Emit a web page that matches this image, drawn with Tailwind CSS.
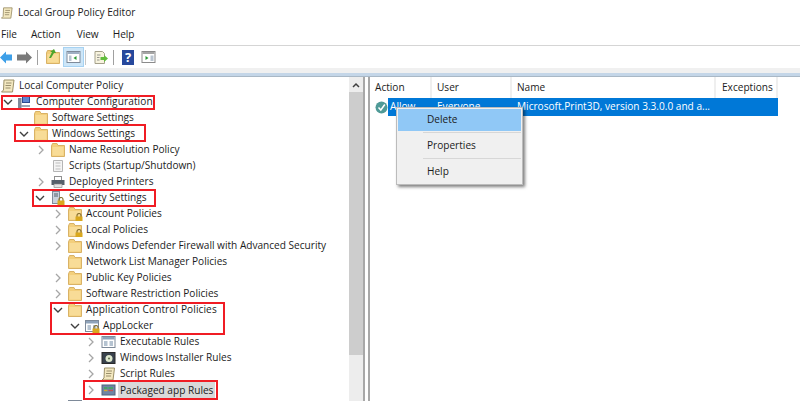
<!DOCTYPE html>
<html lang="en">
  <head>
    <meta charset="UTF-8" />
    <title>Local Group Policy Editor</title>
    <script src="https://cdn.jsdelivr.net/npm/@tailwindcss/browser@4"></script>
  </head>
  <body class="w-[800px] h-[401px] overflow-hidden bg-white font-['Open_Sans','Noto_Sans',sans-serif] text-[10.1px] text-[#1c1c1c]">
    <svg class="hidden">
      <symbol id="folder" viewBox="0 0 14 14">
        <path d="M0.500 3V13.500H13.500V2.500H7L6 0.500H1.500Z" fill="#f3cf7c" stroke="#d9b266" />
        <path d="M1.500 4H12.500V12.500H1.500Z" fill="#f8dc97" />
      </symbol>
      <symbol id="lock" viewBox="0 0 8 8">
        <path d="M2 4V2.500A2 2 0 0 1 6 2.500V4" fill="none" stroke="#8a7434" stroke-width="1.200" />
        <rect x="0.500" y="3.500" width="7" height="4.500" fill="#d9a81e" />
      </symbol>
      <symbol id="scroll" viewBox="0 0 14 14">
        <path d="M3 1H13L11.500 13H0.500L2.500 11Z" fill="#f3e8c0" stroke="#9c9068" />
        <path d="M5 4H10.500M4.500 6.500H10M4.500 9H9.500" stroke="#8f8462" stroke-width="0.900" />
      </symbol>
      <symbol id="right" viewBox="0 0 8 10">
        <path d="M2 1L6 5L2 9" fill="none" stroke="#a6a6a6" stroke-width="1.300" />
      </symbol>
      <symbol id="down" viewBox="0 0 10 8">
        <path d="M1 2L5 6L9 2" fill="none" stroke="#404040" stroke-width="1.400" />
      </symbol>
      <symbol id="win" viewBox="0 0 14 14">
        <rect x="0.500" y="1.500" width="13" height="11" fill="#fff" stroke="#7e8a99" />
        <rect x="1" y="2" width="12" height="2.500" fill="#8fa3ba" />
        <path d="M2.500 6H6V11H2.500ZM8 6H11.500V11H8Z" fill="#b5c3d1" />
      </symbol>
    </svg>

    <header class="h-[25px] flex items-center pl-[1px] gap-[5px]">
      <svg class="w-[12px] h-[14px]"><use href="#scroll" /></svg>
      <span>Local Group Policy Editor</span>
    </header>

    <nav class="h-[21px] flex items-center pl-[1px] border-b border-[#d5d5d5]">
      <span>File</span>
      <span class="ml-[14px]">Action</span>
      <span class="ml-[16px]">View</span>
      <span class="ml-[14px]">Help</span>
    </nav>

    <div class="h-[22px] flex items-center">
      <svg class="w-[12px] h-[13px]" viewBox="0 0 12 13"><path d="M0 6.500L6 0.500V3.500H12V9.500H6V12.500Z" fill="#3d9fe8" /></svg>
      <svg class="w-[15px] h-[13px] ml-[5px]" viewBox="0 0 15 13"><path d="M15 6.500L9 0.500V3.500H0V9.500H9V12.500Z" fill="#7a7a7a" /></svg>
      <div class="w-px h-[15px] bg-[#a0a0a0] ml-[5px]"></div>
      <div class="w-[14px] h-[14px] ml-[8px] relative">
        <svg class="w-[14px] h-[14px]"><use href="#folder" /></svg>
        <svg class="absolute left-[2px] top-[-1px] w-[9px] h-[10px]" viewBox="0 0 9 10"><path d="M1 9L4 3H2L6 0L8 4H6L3 9Z" fill="#4ea52d" /></svg>
      </div>
      <div class="w-[21px] h-[20px] ml-[3px] bg-[#cde6f8] border border-[#a6d2f2] flex items-center justify-center">
        <svg class="w-[15px] h-[14px]" viewBox="0 0 14 14"><rect x="0.500" y="1.500" width="13" height="11" fill="#fff" stroke="#7e8a99" /><rect x="1" y="2" width="12" height="2" fill="#9fb0c4" /><path d="M10 6V10L7 8Z" fill="#2c9a36" /><path d="M2.500 5.500H5V11H2.500Z" fill="#b9c4d0" /></svg>
      </div>
      <div class="w-px h-[15px] bg-[#c8c8c8] ml-[1px]"></div>
      <svg class="w-[16px] h-[15px] ml-[7px]" viewBox="0 0 15 15"><path d="M1.500 1.500H9L11 3.500V13.500H1.500Z" fill="#f7f3de" stroke="#a5a08a" /><path d="M3.500 5H7M3.500 7.500H6M3.500 10H6" stroke="#7c7c7c" stroke-width="0.800" /><path d="M7 7H10.500V5L14.500 8.500L10.500 12V10H7Z" fill="#62bd3c" /></svg>
      <div class="w-px h-[15px] bg-[#a0a0a0] ml-[4px]"></div>
      <div class="w-[12px] h-[15px] ml-[8px] bg-[#26489c] text-white text-[13px] leading-[15px] font-bold text-center">?</div>
      <svg class="w-[15px] h-[14px] ml-[7px]" viewBox="0 0 14 14"><rect x="0.500" y="1.500" width="13" height="11" fill="#fff" stroke="#8b8b8b" /><rect x="1" y="2" width="12" height="2" fill="#a5a5a5" /><path d="M4 6V10L7 8Z" fill="#2c9a36" /><path d="M9 5.500H12V11H9Z" fill="#b9c4d0" /></svg>
    </div>
    <div class="h-[5px] bg-[#f0f0f0]"></div>

    <div class="h-[4px] bg-[#c4d6e8] border-b border-[#a9b8c6]"></div>

    <main class="flex h-[325px]">
      <div class="w-[349px] relative overflow-hidden pt-[1px]">
        <div class="h-[16px] flex items-center">
          <svg class="w-[14px] h-[14px] ml-[1px] mr-[4px]"><use href="#scroll" /></svg>
          <span>Local Computer Policy</span>
        </div>
        <div class="h-[16px] flex items-center pl-[3px]">
          <svg class="w-[10px] h-[8px] mr-[4px]"><use href="#down" /></svg>
          <svg class="w-[14px] h-[14px] mr-[5px]" viewBox="0 0 14 14"><rect x="5" y="1" width="8" height="7" fill="#2d4a90" /><rect x="6" y="2" width="6" height="5" fill="#5f86cf" /><rect x="1" y="3" width="3.500" height="10" fill="#7f8a9a" /><rect x="4" y="10" width="9" height="2" fill="#9aa6b6" /></svg>
          <span class="tracking-[0.1px]">Computer Configuration</span>
        </div>
        <div class="h-[16px] flex items-center pl-[34px]">
          <svg class="w-[14px] h-[14px] mr-[4px]"><use href="#folder" /></svg>
          <span>Software Settings</span>
        </div>
        <div class="h-[16px] flex items-center pl-[19px]">
          <svg class="w-[10px] h-[8px] mr-[5px]"><use href="#down" /></svg>
          <svg class="w-[14px] h-[14px] mr-[4px]"><use href="#folder" /></svg>
          <span>Windows Settings</span>
        </div>
        <div class="h-[16px] flex items-center pl-[37px]">
          <svg class="w-[8px] h-[10px] mr-[6px]"><use href="#right" /></svg>
          <svg class="w-[14px] h-[14px] mr-[4px]"><use href="#folder" /></svg>
          <span>Name Resolution Policy</span>
        </div>
        <div class="h-[16px] flex items-center pl-[51px]">
          <svg class="w-[14px] h-[14px] mr-[4px]" viewBox="0 0 14 14"><path d="M2.500 1.500H11.500V12.500H2.500Z" fill="#f4f4f4" stroke="#b5b5b5" /><path d="M4.500 4H9.500M4.500 7H9.500M4.500 10H9.500" stroke="#bdbdbd" /></svg>
          <span>Scripts (Startup/Shutdown)</span>
        </div>
        <div class="h-[16px] flex items-center pl-[37px]">
          <svg class="w-[8px] h-[10px] mr-[6px]"><use href="#right" /></svg>
          <svg class="w-[14px] h-[14px] mr-[4px]" viewBox="0 0 14 14"><rect x="3.500" y="1.500" width="7" height="4" fill="#fff" stroke="#909090" /><rect x="0.500" y="5" width="13" height="5" fill="#56606b" /><rect x="3" y="9" width="8" height="3.500" fill="#e4e4e4" stroke="#808080" stroke-width="0.600" /></svg>
          <span>Deployed Printers</span>
        </div>
        <div class="h-[16px] flex items-center pl-[35px]">
          <svg class="w-[10px] h-[8px] mr-[6px]"><use href="#down" /></svg>
          <div class="w-[14px] h-[14px] mr-[4px] relative">
            <svg class="w-[8px] h-[13px] ml-[1px]" viewBox="0 0 8 13"><rect x="0.500" y="0.500" width="7" height="12" fill="#c9d2dc" stroke="#7f8b99" /><path d="M2 3H6M2 5H6" stroke="#55606d" /></svg>
            <svg class="absolute right-0 bottom-0 w-[8px] h-[8px]"><use href="#lock" /></svg>
          </div>
          <span>Security Settings</span>
        </div>
        <div class="h-[16px] flex items-center pl-[54px]">
          <svg class="w-[8px] h-[10px] mr-[6px]"><use href="#right" /></svg>
          <div class="w-[14px] h-[14px] mr-[4px] relative">
            <svg class="w-[14px] h-[14px]"><use href="#folder" /></svg>
            <svg class="absolute -right-px bottom-0 w-[8px] h-[8px]"><use href="#lock" /></svg>
          </div>
          <span>Account Policies</span>
        </div>
        <div class="h-[16px] flex items-center pl-[54px]">
          <svg class="w-[8px] h-[10px] mr-[6px]"><use href="#right" /></svg>
          <div class="w-[14px] h-[14px] mr-[4px] relative">
            <svg class="w-[14px] h-[14px]"><use href="#folder" /></svg>
            <svg class="absolute -right-px bottom-0 w-[8px] h-[8px]"><use href="#lock" /></svg>
          </div>
          <span>Local Policies</span>
        </div>
        <div class="h-[16px] flex items-center pl-[54px]">
          <svg class="w-[8px] h-[10px] mr-[6px]"><use href="#right" /></svg>
          <svg class="w-[14px] h-[14px] mr-[4px]"><use href="#folder" /></svg>
          <span>Windows Defender Firewall with Advanced Security</span>
        </div>
        <div class="h-[16px] flex items-center pl-[68px]">
          <svg class="w-[14px] h-[14px] mr-[4px]"><use href="#folder" /></svg>
          <span>Network List Manager Policies</span>
        </div>
        <div class="h-[16px] flex items-center pl-[54px]">
          <svg class="w-[8px] h-[10px] mr-[6px]"><use href="#right" /></svg>
          <svg class="w-[14px] h-[14px] mr-[4px]"><use href="#folder" /></svg>
          <span>Public Key Policies</span>
        </div>
        <div class="h-[16px] flex items-center pl-[54px]">
          <svg class="w-[8px] h-[10px] mr-[6px]"><use href="#right" /></svg>
          <svg class="w-[14px] h-[14px] mr-[4px]"><use href="#folder" /></svg>
          <span>Software Restriction Policies</span>
        </div>
        <div class="h-[16px] flex items-center pl-[53px]">
          <svg class="w-[10px] h-[8px] mr-[5px]"><use href="#down" /></svg>
          <svg class="w-[14px] h-[14px] mr-[4px]"><use href="#folder" /></svg>
          <span class="tracking-[0.1px]">Application Control Policies</span>
        </div>
        <div class="h-[16px] flex items-center pl-[70px]">
          <svg class="w-[10px] h-[8px] mr-[5px]"><use href="#down" /></svg>
          <div class="w-[14px] h-[14px] mr-[4px] relative">
            <svg class="w-[14px] h-[14px]"><use href="#win" /></svg>
            <svg class="absolute -right-px bottom-0 w-[8px] h-[8px]"><use href="#lock" /></svg>
          </div>
          <span>AppLocker</span>
        </div>
        <div class="h-[16px] flex items-center pl-[87px]">
          <svg class="w-[8px] h-[10px] mr-[6px]"><use href="#right" /></svg>
          <svg class="w-[15px] h-[14px] mr-[4px]"><use href="#win" /></svg>
          <span>Executable Rules</span>
        </div>
        <div class="h-[16px] flex items-center pl-[87px]">
          <svg class="w-[8px] h-[10px] mr-[6px]"><use href="#right" /></svg>
          <svg class="w-[15px] h-[14px] mr-[4px]" viewBox="0 0 14 14"><rect x="0.500" y="1.500" width="13" height="11" fill="#39424d" stroke="#2a2a2a" /><circle cx="7.500" cy="7.500" r="3.500" fill="#dfe9cf" /><circle cx="7.500" cy="7.500" r="1" fill="#5a6b4a" /></svg>
          <span>Windows Installer Rules</span>
        </div>
        <div class="h-[16px] flex items-center pl-[87px]">
          <svg class="w-[8px] h-[10px] mr-[6px]"><use href="#right" /></svg>
          <svg class="w-[15px] h-[14px] mr-[4px]"><use href="#scroll" /></svg>
          <span>Script Rules</span>
        </div>
        <div class="h-[16px] flex items-center pl-[87px]">
          <svg class="w-[8px] h-[10px] mr-[6px]"><use href="#right" /></svg>
          <svg class="w-[15px] h-[14px] mr-[2px]" viewBox="0 0 14 14"><rect x="0.500" y="2" width="13" height="10" fill="#6d86a6" stroke="#56657a" /><path d="M2.500 5H6M7 5H11.500" stroke="#3cae55" stroke-width="1.400" /><path d="M2.500 7.500H6" stroke="#d8a62c" stroke-width="1.400" /><path d="M7 7.500H11.500" stroke="#c65050" stroke-width="1.400" /></svg>
          <span class="bg-[#d9d9d9] px-[2px] leading-[16px]">Packaged app Rules</span>
        </div>
        <div class="h-[16px] flex items-center pl-[68px]">
          <svg class="w-[14px] h-[14px]"><use href="#win" /></svg>
        </div>

        <!-- red annotation boxes drawn over the tree -->
        <div class="absolute left-[1px] top-[18px] w-[154px] h-[15px] border-2 border-[#f01c24]"></div>
        <div class="absolute left-[14px] top-[47px] w-[132px] h-[18px] border-2 border-[#f01c24]"></div>
        <div class="absolute left-[32px] top-[112px] w-[124px] h-[18px] border-2 border-[#f01c24]"></div>
        <div class="absolute left-[50px] top-[225px] w-[175px] h-[33px] border-2 border-[#f01c24]"></div>
        <div class="absolute left-[83px] top-[303px] w-[135px] h-[20px] border-2 border-[#f01c24]"></div>
      </div>

      <div class="w-[14px] bg-[#ededed] flex flex-col">
        <div class="h-[15px] flex items-center justify-center">
          <svg class="w-[8px] h-[6px]" viewBox="0 0 8 6"><path d="M1 5L4 2L7 5" fill="none" stroke="#404040" stroke-width="1.500" /></svg>
        </div>
        <div class="h-[263px] bg-[#cdcdcd]"></div>
      </div>
      <div class="w-[5px] bg-white border-l-2 border-[#a8a8a8]"></div>

      <div class="flex-1 relative border-l-2 border-[#a8a8a8]">
        <div class="flex h-[21px] items-center">
          <div class="w-[62px] pl-[5px] border-r-2 border-[#efefef] h-full flex items-center">Action</div>
          <div class="w-[80px] pl-[5px] border-r-2 border-[#efefef] h-full flex items-center">User</div>
          <div class="w-[204px] pl-[5px] border-r-2 border-[#efefef] h-full flex items-center">Name</div>
          <div class="w-[62px] pl-[6px] border-r-2 border-[#efefef] h-full flex items-center">Exceptions</div>
        </div>
        <div class="flex items-center h-[18px]">
          <svg class="w-[13px] h-[13px] ml-[5px]" viewBox="0 0 13 13"><circle cx="6.500" cy="6.500" r="6" fill="#4f9a97" /><path d="M3.500 6.500L5.800 9L9.800 3.500" fill="none" stroke="#fff" stroke-width="1.500" /></svg>
          <div class="w-[390px] h-full bg-[#0078d7] text-white flex items-center">
            <span class="w-[49px] pl-[2px]">Allow</span>
            <span class="w-[80px]">Everyone</span>
            <span>Microsoft.Print3D, version 3.3.0.0 and a...</span>
          </div>
        </div>

        <!-- context menu -->
        <div class="absolute left-[26px] top-[30px] w-[127px] h-[78px] bg-[#f0f0f0] border border-[#bcbcbc] shadow-[2px_2px_3px_rgba(0,0,0,0.5)] p-[1px]">
          <div class="h-[22px] bg-[#90c8f6] flex items-center pl-[29px]">Delete</div>
          <div class="h-px bg-[#d7d7d7] ml-[25px] mt-[1px]"></div>
          <div class="h-[25px] flex items-center pl-[29px]">Properties</div>
          <div class="h-px bg-[#d7d7d7] ml-[25px]"></div>
          <div class="h-[25px] flex items-center pl-[29px]">Help</div>
        </div>
      </div>
    </main>
  </body>
</html>
